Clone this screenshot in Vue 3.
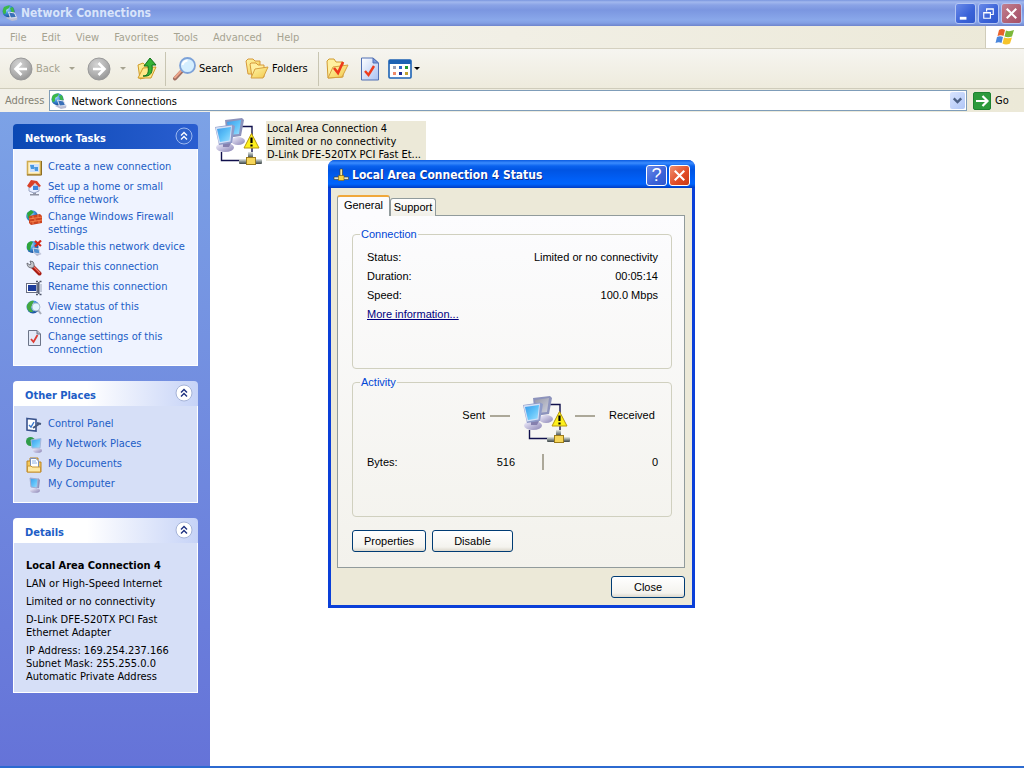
<template>
  <svg class="sprite" aria-hidden="true">
    <defs>
      <radialGradient id="gGlobe" cx="0.35" cy="0.3" r="0.8">
        <stop offset="0" stop-color="#b5e4ff" />
        <stop offset="0.5" stop-color="#3a8bd8" />
        <stop offset="1" stop-color="#123f86" />
      </radialGradient>
      <radialGradient id="gGray" cx="0.4" cy="0.3" r="0.8">
        <stop offset="0" stop-color="#d4d4d4" />
        <stop offset="0.6" stop-color="#aeaeae" />
        <stop offset="1" stop-color="#8e8e8e" />
      </radialGradient>
      <linearGradient id="gScreen" x1="0" y1="0" x2="1" y2="1">
        <stop offset="0" stop-color="#3c9ae8" />
        <stop offset="0.5" stop-color="#5cc0f8" />
        <stop offset="1" stop-color="#a0e0ff" />
      </linearGradient>
      <linearGradient id="gScreenOff" x1="0" y1="0" x2="1" y2="1">
        <stop offset="0" stop-color="#9698a8" />
        <stop offset="1" stop-color="#ced0dc" />
      </linearGradient>
      <linearGradient id="gBase" x1="0" y1="0" x2="1" y2="1">
        <stop offset="0" stop-color="#f4f2ff" />
        <stop offset="1" stop-color="#8a84b4" />
      </linearGradient>
      <linearGradient id="gFolder" x1="0" y1="0" x2="1" y2="1">
        <stop offset="0" stop-color="#fff6a8" />
        <stop offset="1" stop-color="#f2c84c" />
      </linearGradient>
      <linearGradient id="gPaper" x1="0" y1="0" x2="1" y2="1">
        <stop offset="0" stop-color="#ffffff" />
        <stop offset="1" stop-color="#a9c1f2" />
      </linearGradient>
      <linearGradient id="gPipe" x1="0" y1="0" x2="0" y2="1">
        <stop offset="0" stop-color="#e4e8e4" />
        <stop offset="0.5" stop-color="#8a9494" />
        <stop offset="1" stop-color="#3c4444" />
      </linearGradient>
    </defs>

    <symbol id="i-globe" viewBox="0 0 16 16">
      <path d="M4 13 9 10 15.500 12.500 15 15 10 16z" fill="#b9bdd4" />
      <circle cx="6.500" cy="6.200" r="6" fill="url(#gGlobe)" />
      <path d="M2 2Q5 0 8 0.500L7 3 4 5 4 8 2 9.500Q-0.500 6 2 2zM8 3 11 2 12.500 7 10 8z" fill="#3cb848" />
      <path d="M6.500 7 12.500 8 14.500 12.500 8.500 13z" fill="#3a70b8" stroke="#dfe3f0" />
    </symbol>

    <symbol id="i-back" viewBox="0 0 24 24">
      <circle cx="12" cy="12" r="11" fill="url(#gGray)" stroke="#9a9a9a" />
      <path d="M12.500 6 6.500 12 12.500 18M7 12H18" fill="none" stroke="#fff" stroke-width="2.600" />
    </symbol>
    <symbol id="i-forward" viewBox="0 0 24 24">
      <circle cx="12" cy="12" r="11" fill="url(#gGray)" stroke="#9a9a9a" />
      <path d="M11.500 6 17.500 12 11.500 18M17 12H6" fill="none" stroke="#fff" stroke-width="2.600" />
    </symbol>

    <symbol id="i-up" viewBox="0 0 24 24">
      <path d="M3 8 8 6 10 8 16 7 16 19 5 22z" fill="url(#gFolder)" stroke="#d09a28" />
      <path d="M3 21 8 11 21 10 16 21z" fill="#ffe788" stroke="#d09a28" />
      <path d="M8 19C13 19 14 15 13 9H9L15 1 21 8H17C18 15 16 20 8 19z" fill="#35b335" stroke="#13701c" />
    </symbol>

    <symbol id="i-search" viewBox="0 0 24 24">
      <path d="M9.500 14.500 3 21.500" stroke="#9f6d60" stroke-width="4" stroke-linecap="round" />
      <path d="M9 14 3 20.500" stroke="#eca58a" stroke-width="2" stroke-linecap="round" />
      <circle cx="15.500" cy="8.500" r="7.500" fill="#d5efff" stroke="#7da2d8" stroke-width="1.800" />
      <path d="M10.500 8Q11.500 4 15.500 3.500" fill="none" stroke="#fff" stroke-width="2" />
    </symbol>

    <symbol id="i-folders" viewBox="0 0 24 24">
      <path d="M1 4 3 2H8L10 4H15V17H3z" fill="url(#gFolder)" stroke="#d6983a" />
      <path d="M5 7 6 6H11L13 8H19V20H7z" fill="#fff0a0" stroke="#d6983a" />
      <path d="M6 21 10 12 23 10 18 21z" fill="url(#gFolder)" stroke="#d6a040" />
    </symbol>

    <symbol id="i-folder-check" viewBox="0 0 24 24">
      <path d="M2 4 4 2H9L11 5H18V20L3 21z" fill="#fff0a0" stroke="#d09a30" />
      <path d="M3 21 8 10 23 8 17 20z" fill="url(#gFolder)" stroke="#d6a040" />
      <path d="M9 11 13 16 18 5" fill="none" stroke="#ee3a1c" stroke-width="2.600" />
    </symbol>

    <symbol id="i-doc-check" viewBox="0 0 20 24">
      <path d="M1.500 1H13L18.500 6V23H1.500z" fill="url(#gPaper)" stroke="#5270b4" />
      <path d="M13 1V6H18.500z" fill="#7c9be0" stroke="#5270b4" />
      <path d="M5 14 8.500 18 14 9" fill="none" stroke="#ee3a1c" stroke-width="2.400" />
    </symbol>

    <symbol id="i-views" viewBox="0 0 24 20">
      <rect x="1" y="1" width="22" height="18" rx="1" fill="#fff" stroke="#1c62b4" stroke-width="1.600" />
      <path d="M1 3H23" stroke="#1c62b4" stroke-width="4" />
      <path d="M5 7H8V10H5z" fill="#98a0b8" />
      <path d="M11 7H14V10H11z" fill="#2a68c8" />
      <path d="M17 7H20V10H17z" fill="#209a30" />
      <path d="M5 13H8V16H5z" fill="#f08a68" />
      <path d="M11 13H14V16H11z" fill="#1c2c94" />
      <path d="M17 13H20V16H17z" fill="#c0a030" />
    </symbol>

    <symbol id="i-winlogo" viewBox="0 0 20 18">
      <path d="M4 2Q7 0 10 2L8.500 8Q6 6.500 2.500 8z" fill="#e8622c" />
      <path d="M11 2.500Q14 4 19 2L17 8.500Q13 10 9.500 8.500z" fill="#7cb83a" />
      <path d="M2 9Q5 7.500 8 9L6.500 15Q4 13.500 0.500 15z" fill="#4a86dc" />
      <path d="M9 9.500Q13 11 17 9.500L15 15.500Q11 17.500 7.500 15.500z" fill="#f6c42c" />
    </symbol>

    <symbol id="i-go" viewBox="0 0 18 18">
      <rect x="0.500" y="0.500" width="17" height="17" rx="1.500" fill="#2c9a3c" stroke="#1d8230" />
      <path d="M3 9H14M9.500 4 14.500 9 9.500 14" fill="none" stroke="#fff" stroke-width="2.200" />
    </symbol>

    <symbol id="i-new" viewBox="0 0 16 16">
      <rect x="1.500" y="1.500" width="13" height="13" fill="#fff3c8" stroke="#d0ac50" stroke-width="1.600" />
      <path d="M1 15H15.500V1" fill="none" stroke="#8c6c24" />
      <rect x="4" y="4" width="9" height="8" fill="#cfe2ff" />
      <path d="M4 5H8V9H5zM8 7H12V11H9z" fill="#4a98e0" />
    </symbol>
    <symbol id="i-home" viewBox="0 0 16 16">
      <path d="M7 12H10V14H13V15.500H4V14H7z" fill="#9094a4" />
      <path d="M3 5H13V11L8 13 3 11z" fill="#e8eeff" stroke="#9ca6c4" />
      <path d="M7 6H12V10H7z" fill="#3c84dc" />
      <path d="M1 6 5 0 11 1 15 6 13 7 9 3 4 8z" fill="#d84028" />
    </symbol>
    <symbol id="i-firewall" viewBox="0 0 16 16">
      <circle cx="6" cy="6" r="5.800" fill="url(#gGlobe)" />
      <path d="M1 3 5 0 8 2 4 6 2 9z" fill="#2ea53c" />
      <path d="M3 6 14 4 16 6V13L5 15 3 13z" fill="#cc4420" />
      <path d="M3 9 16 7M4 12 16 10M7 6V9M12 5V7M9 9V11M7 12V14M13 11V13" stroke="#ff9058" stroke-width="0.800" />
    </symbol>
    <symbol id="i-disable" viewBox="0 0 16 16">
      <path d="M8 13 13 12 15.500 14 11 16z" fill="#b0b4cc" />
      <circle cx="6.500" cy="7" r="6" fill="url(#gGlobe)" />
      <path d="M1 4Q4 0 7 2L5 6 4 11 1 9z" fill="#2ea53c" />
      <path d="M7 8 13 9 14 14 8 13z" fill="#4f8fd0" stroke="#d4d8e8" />
      <path d="M9 1 15 6M15 0.500 9 6.500" stroke="#d42818" stroke-width="2.200" />
    </symbol>
    <symbol id="i-repair" viewBox="0 0 16 16">
      <path d="M7 7 13.500 13.500" stroke="#a81c14" stroke-width="4" stroke-linecap="round" />
      <path d="M7.500 6.500 14 13" stroke="#f07060" stroke-width="1.200" />
      <path d="M1 3 4 5 5 4 4 1Q8 1 8 4L8 7 6 8Q1 8 1 3z" fill="#c4c6cc" stroke="#5e6068" stroke-width="0.800" />
    </symbol>
    <symbol id="i-rename" viewBox="0 0 16 16">
      <rect x="0.500" y="3.500" width="11" height="9" fill="#fff" stroke="#6a6e80" />
      <rect x="2" y="5" width="8" height="6" fill="#1c3c9c" />
      <path d="M10 1.500H12M13.500 1.500H15.500M12.800 2V14M10 14.500H12M13.500 14.500H15.500" stroke="#4c5468" stroke-width="1.400" />
      <path d="M10.500 4V12M15 4V12" stroke="#9ca4b8" />
    </symbol>
    <symbol id="i-status" viewBox="0 0 16 16">
      <circle cx="7" cy="7" r="6.500" fill="url(#gGlobe)" />
      <path d="M1 5Q4 0 8 1L6 5 5 8 7 12 4 12Q0 9 1 5z" fill="#44a840" />
      <circle cx="10" cy="7" r="4" fill="#e2f3ff" stroke="#a8bcd0" />
      <path d="M12 10 15 14" stroke="#a8acb8" stroke-width="2" />
    </symbol>
    <symbol id="i-settings" viewBox="0 0 16 16">
      <path d="M2.500 0.500H11L14.500 4V15.500H2.500z" fill="#e4eaf8" stroke="#6c7488" />
      <path d="M11 0.500V4H14.500" fill="#b4bccc" stroke="#6c7488" />
      <path d="M5 9 7.500 12 11.500 5" fill="none" stroke="#dc3c34" stroke-width="1.800" />
    </symbol>

    <symbol id="i-control" viewBox="0 0 16 16">
      <path d="M1 1.500 10 2.500V14L1 13z" fill="#fff" stroke="#38528c" stroke-width="1.600" />
      <path d="M3 8 5 10 8 5" fill="none" stroke="#3a78cc" stroke-width="1.400" />
      <path d="M7 11 13 7M11 6 15 7" fill="none" stroke="#46587c" stroke-width="2" />
    </symbol>
    <symbol id="i-places" viewBox="0 0 16 16">
      <ellipse cx="11.500" cy="13.500" rx="4.500" ry="2.300" fill="url(#gBase)" />
      <circle cx="4.500" cy="4.500" r="4.500" fill="#2f9c4a" />
      <path d="M5 3 15 1.500 14 11 6 11z" fill="url(#gScreen)" stroke="#a6b8dc" />
    </symbol>
    <symbol id="i-documents" viewBox="0 0 16 16">
      <path d="M1 4H4V1H12V5H15V15H1z" fill="#f4c85c" stroke="#bd8420" />
      <path d="M4.500 1.500H10L12.500 4V11H4.500z" fill="#fff" stroke="#7c90bc" />
      <path d="M6 4H10M6 6H11" stroke="#8cb0e8" />
      <path d="M1.500 9H5L6 10H14.500V15H1.500z" fill="#ffe9a4" stroke="#c99632" />
    </symbol>
    <symbol id="i-computer" viewBox="0 0 16 16">
      <ellipse cx="9" cy="13.500" rx="5" ry="2.300" fill="url(#gBase)" />
      <path d="M12 1 14 3 13 11 10 11z" fill="#9094bc" />
      <path d="M4 1 12 2 11 11 5 10z" fill="url(#gScreen)" stroke="#a3acd0" />
    </symbol>

    <symbol id="i-lan" viewBox="0 0 48 48">
      <path d="M26 8.500H37V36M6.500 34V42.500H28" fill="none" stroke="#10104c" stroke-width="1.400" />
      <ellipse cx="23" cy="23" rx="7" ry="4" fill="url(#gBase)" />
      <path d="M10 2 27 0 29 2 26 18 12 20z" fill="#8d93bc" />
      <path d="M12 4 26 2 24 16 14 17z" />
      <ellipse cx="10" cy="29.500" rx="9" ry="4.500" fill="url(#gBase)" />
      <path d="M8 24 17 23 14 29 8 29z" fill="#8580ae" />
      <path d="M0 9 17 6.500 20 8 17 25 4 27z" fill="#8f9bc8" />
      <path d="M0.500 9.500 17 7.500 15.500 23.500 4 25.500z" fill="#d4e0f6" />
      <path d="M2 11 16 9 14.500 22.500 5 24z" fill="url(#gScreen)" />
      <path d="M36.500 15.500 44 30H29z" fill="#fdf01c" stroke="#b8980c" stroke-linejoin="round" />
      <path d="M36.500 19.500V25M36.500 26.500V28.500" stroke="#000" stroke-width="2.200" />
      <rect x="33" y="34" width="5" height="6" fill="url(#gPipe)" />
      <rect x="24" y="41" width="23" height="5" rx="1" fill="url(#gPipe)" />
      <rect x="31.500" y="39.500" width="9" height="7" fill="#f6d65a" stroke="#9c7c1c" />
    </symbol>
    <symbol id="i-plug" viewBox="0 0 16 16">
      <path d="M7 2H9.500V9H7z" fill="#f4e8a0" stroke="#3c3c20" stroke-width="0.600" />
      <path d="M1 10H15.500V12.500H1z" fill="#e4e4d4" stroke="#3c3c20" stroke-width="0.600" />
      <path d="M5.500 8.500H11V13.500H5.500z" fill="#f8d440" stroke="#7c5c10" stroke-width="0.600" />
    </symbol>
  </svg>

  <div class="window">
    <header class="titlebar">
      <svg class="icon16"><use href="#i-globe" /></svg>
      <h1>Network Connections</h1>
      <button class="cap" aria-label="Minimize">
        <svg viewBox="0 0 20 20"><path d="M4 15H11" stroke="#fff" stroke-width="3" /></svg>
      </button>
      <button class="cap" aria-label="Restore">
        <svg viewBox="0 0 20 20">
          <path d="M8 8V5H15V11H12M8 5.500H15" fill="none" stroke="#fff" stroke-width="1.200" />
          <path d="M5 9H12V15H5zM5 9.500H12" fill="none" stroke="#fff" stroke-width="1.200" />
        </svg>
      </button>
      <button class="cap cap-close" aria-label="Close window">
        <svg viewBox="0 0 20 20"><path d="M5 5 15 15M15 5 5 15" stroke="#fff" stroke-width="2.200" /></svg>
      </button>
    </header>

    <nav class="menubar">
      <button v-for="item in menu" :key="item">{{ item }}</button>
      <span class="flag"><svg><use href="#i-winlogo" /></svg></span>
    </nav>

    <div class="toolbar">
      <button class="tool off"><svg class="icon24"><use href="#i-back" /></svg>Back<i class="caret"></i></button>
      <button class="tool off fwd" aria-label="Forward"><svg class="icon24"><use href="#i-forward" /></svg><i class="caret"></i></button>
      <button class="tool" aria-label="Up"><svg class="icon24"><use href="#i-up" /></svg></button>
      <span class="sep"></span>
      <button class="tool"><svg class="icon24"><use href="#i-search" /></svg>Search</button>
      <button class="tool folders"><svg class="icon24"><use href="#i-folders" /></svg>Folders</button>
      <span class="sep"></span>
      <button class="tool options" aria-label="Folder options"><svg class="icon24"><use href="#i-folder-check" /></svg></button>
      <button class="tool" aria-label="Properties page"><svg class="icon24"><use href="#i-doc-check" /></svg></button>
      <button class="tool views" aria-label="Views"><svg class="icon24"><use href="#i-views" /></svg><i class="caret"></i></button>
    </div>

    <div class="addressbar">
      <label for="address">Address</label>
      <div class="combo">
        <svg class="icon16"><use href="#i-globe" /></svg>
        <input id="address" v-model="address" type="text" />
        <button class="drop" aria-label="Show addresses">
          <svg viewBox="0 0 14 16"><path d="M3.500 6 7 9.500 10.500 6" fill="none" stroke="#4d6185" stroke-width="2.200" /></svg>
        </button>
      </div>
      <button class="go"><svg><use href="#i-go" /></svg>Go</button>
    </div>

    <div class="body">
      <aside class="sidebar">
        <section v-for="panel in panels" :key="panel.title" class="panel" :class="{ primary: panel.primary }">
          <header>
            <h2>{{ panel.title }}</h2>
            <button class="chevron" :aria-label="'Collapse ' + panel.title">
              <svg viewBox="0 0 18 18">
                <circle cx="9" cy="9" r="8" />
                <path d="M6 8.500 9 5.500 12 8.500M6 12.500 9 9.500 12 12.500" fill="none" stroke-width="1.400" />
              </svg>
            </button>
          </header>
          <ul>
            <li v-for="link in panel.links" :key="link.text">
              <svg class="icon16"><use :href="'#i-' + link.icon" /></svg>
              <a href="#">{{ link.text }}</a>
            </li>
          </ul>
        </section>

        <section class="panel">
          <header>
            <h2>Details</h2>
            <button class="chevron" aria-label="Collapse Details">
              <svg viewBox="0 0 18 18">
                <circle cx="9" cy="9" r="8" />
                <path d="M6 8.500 9 5.500 12 8.500M6 12.500 9 9.500 12 12.500" fill="none" stroke-width="1.400" />
              </svg>
            </button>
          </header>
          <div class="details">
            <p><strong>Local Area Connection 4</strong></p>
            <p>LAN or High-Speed Internet</p>
            <p>Limited or no connectivity</p>
            <p>D-Link DFE-520TX PCI Fast<br />Ethernet Adapter</p>
            <p>IP Address: 169.254.237.166<br />Subnet Mask: 255.255.0.0<br />Automatic Private Address</p>
          </div>
        </section>
      </aside>

      <main>
        <div class="tile">
          <svg class="lan lan-on"><use href="#i-lan" /></svg>
          <div class="tile-text">
            <div>Local Area Connection 4</div>
            <div>Limited or no connectivity</div>
            <div>D-Link DFE-520TX PCI Fast Et...</div>
          </div>
        </div>
      </main>
    </div>

    <div class="dialog" role="dialog" aria-labelledby="dialog-title">
      <header>
        <svg class="icon16"><use href="#i-plug" /></svg>
        <h2 id="dialog-title">Local Area Connection 4 Status</h2>
        <button class="cap help" aria-label="Help">?</button>
        <button class="cap close" aria-label="Close dialog">
          <svg viewBox="0 0 20 20"><path d="M5 5 15 15M15 5 5 15" stroke="#fff" stroke-width="2.200" /></svg>
        </button>
      </header>
      <div class="dialog-body">
        <div class="tabs" role="tablist">
          <button
            v-for="tab in tabs"
            :key="tab"
            role="tab"
            :class="{ active: tab === activeTab }"
            @click="activeTab = tab"
          >{{ tab }}</button>
        </div>
        <div class="page">
          <fieldset>
            <legend>Connection</legend>
            <dl>
              <div v-for="row in status" :key="row.label">
                <dt>{{ row.label }}</dt>
                <dd>{{ row.value }}</dd>
              </div>
            </dl>
            <a class="more" href="#">More information...</a>
          </fieldset>
          <fieldset>
            <legend>Activity</legend>
            <div class="activity">
              <span class="sent">Sent<i></i></span>
              <svg class="lan lan-off"><use href="#i-lan" /></svg>
              <span class="received"><i></i>Received</span>
            </div>
            <div class="bytes">
              <span>Bytes:</span>
              <span>516</span>
              <i></i>
              <span class="num">0</span>
            </div>
          </fieldset>
          <div class="actions">
            <button class="btn">Properties</button>
            <button class="btn wide">Disable</button>
          </div>
        </div>
        <div class="footer">
          <button class="btn">Close</button>
        </div>
      </div>
    </div>
  </div>
</template>

<script setup>
import { ref } from 'vue'

const address = ref('Network Connections')
const menu = ['File', 'Edit', 'View', 'Favorites', 'Tools', 'Advanced', 'Help']

const panels = [
  {
    title: 'Network Tasks',
    primary: true,
    links: [
      { icon: 'new', text: 'Create a new connection' },
      { icon: 'home', text: 'Set up a home or small office network' },
      { icon: 'firewall', text: 'Change Windows Firewall settings' },
      { icon: 'disable', text: 'Disable this network device' },
      { icon: 'repair', text: 'Repair this connection' },
      { icon: 'rename', text: 'Rename this connection' },
      { icon: 'status', text: 'View status of this connection' },
      { icon: 'settings', text: 'Change settings of this connection' }
    ]
  },
  {
    title: 'Other Places',
    primary: false,
    links: [
      { icon: 'control', text: 'Control Panel' },
      { icon: 'places', text: 'My Network Places' },
      { icon: 'documents', text: 'My Documents' },
      { icon: 'computer', text: 'My Computer' }
    ]
  }
]

const tabs = ['General', 'Support']
const activeTab = ref('General')

const status = [
  { label: 'Status:', value: 'Limited or no connectivity' },
  { label: 'Duration:', value: '00:05:14' },
  { label: 'Speed:', value: '100.0 Mbps' }
]
</script>

<style>
body {
  margin: 0;
  overflow: hidden;
}
</style>

<style scoped>
* { box-sizing: border-box; }

.sprite {
  position: absolute;
  width: 0;
  height: 0;
}

button, input {
  font: inherit;
  color: inherit;
  background: none;
  border: 0;
  padding: 0;
  margin: 0;
}

h1, h2, p, ul, dl, dd { margin: 0; padding: 0; }
svg { display: block; flex: none; }
.icon16 { width: 16px; height: 16px; }
.icon24 { width: 24px; height: 24px; }

.window {
  position: relative;
  display: flex;
  flex-direction: column;
  height: 100vh;
  font: 11px/13px "DejaVu Sans Condensed", "DejaVu Sans", sans-serif;
  color: #000;
  background: #ece9d8;
}

/* title bar */
.titlebar {
  display: flex;
  align-items: center;
  gap: 2px;
  height: 26px;
  padding: 0 2px;
  background: linear-gradient(#7a96df 0, #a2b8ee 2px, #8aa3e6 5px, #7b96e0 10px, #8aa8ea 20px, #829fe4 23px, #6e84cc 26px);
}
.titlebar h1 {
  flex: 1;
  padding-left: 1px;
  font: bold 12px/16px "DejaVu Sans Condensed", "DejaVu Sans", sans-serif;
  color: #d8e4fa;
}
.cap {
  width: 21px;
  height: 21px;
  border: 1px solid #b4c6f4;
  border-radius: 3px;
  background: linear-gradient(135deg, #6a8ae8, #3a62d8 60%, #3058cc);
}
.cap svg { width: 19px; height: 19px; }
.cap-close { background: linear-gradient(135deg, #c08090, #b06074 60%, #a45068); }

/* menu */
.menubar {
  display: flex;
  align-items: center;
  height: 23px;
  padding-left: 10px;
  gap: 15px;
  color: #a6a391;
  border-bottom: 1px solid #d4d0c0;
  background: linear-gradient(90deg, #f6f5f2, #ece9d8);
}
.flag {
  display: flex;
  align-items: center;
  justify-content: center;
  width: 39px;
  height: 22px;
  margin-left: auto;
  border-left: 1px solid #d0ccba;
  background: #fff;
}
.flag svg { width: 20px; height: 18px; }

/* toolbar */
.toolbar {
  display: flex;
  align-items: center;
  height: 40px;
  padding-left: 9px;
  gap: 6px;
  border-bottom: 1px solid #cfccbb;
  background: linear-gradient(#f6f5f0, #eeebdd);
}
.tool {
  display: flex;
  align-items: center;
  gap: 3px;
}
.off { color: #a6a391; }
.caret {
  width: 0;
  border: 3px solid transparent;
  border-top-color: currentColor;
  border-bottom: 0;
}
.off .caret { margin-left: 6px; }
.fwd { margin: 0 3px 0 6px; }
.folders { margin-left: 6px; }
.options { margin-right: 3px; }
.views { gap: 2px; }
.sep {
  width: 1px;
  height: 34px;
  background: #c8c5b2;
}
.folders + .sep { margin-left: 4px; }

/* address */
.addressbar {
  display: flex;
  align-items: center;
  height: 23px;
  padding-left: 5px;
  gap: 5px;
  background: linear-gradient(90deg, #f2f0e8, #ece9d8);
}
.addressbar label { color: #848274; }
.combo {
  display: flex;
  flex: 1;
  align-items: center;
  height: 21px;
  padding: 1px;
  gap: 4px;
  border: 1px solid #7f9db9;
  background: #fff;
}
.combo input {
  flex: 1;
  padding-top: 2px;
}
.drop {
  width: 15px;
  height: 17px;
  border-radius: 2px;
  background: linear-gradient(135deg, #d8e4ff, #b0c6f6);
}
.go {
  display: flex;
  align-items: center;
  width: 52px;
  gap: 4px;
  padding-left: 1px;
}
.go svg { width: 18px; height: 18px; }

/* sidebar */
.body {
  display: flex;
  flex: 1;
  min-height: 0;
  background: #fff;
  border-bottom: 2px solid #2c6ad0;
}
.sidebar {
  width: 210px;
  padding: 12px 12px 0 13px;
  background: linear-gradient(#7ca2e6, #6573d8);
}
.panel { margin-bottom: 15px; }
.panel header {
  display: flex;
  justify-content: space-between;
  height: 25px;
  padding: 3px 5px 0 12px;
  color: #215dc6;
  border-radius: 4px 4px 0 0;
  background: linear-gradient(90deg, #fff 40%, #c6d3f7);
}
.panel h2 {
  padding-top: 5px;
  font: bold 11px/13px "DejaVu Sans Condensed", "DejaVu Sans", sans-serif;
}
.chevron { height: 18px; }
.chevron svg { width: 18px; height: 18px; }
.chevron circle { fill: #fff; stroke: #a6b4d8; }
.chevron path { stroke: #1c3080; }
.panel ul, .details {
  border: 1px solid #fff;
  border-top: 0;
  background: #d6dff7;
}
.panel ul {
  display: flex;
  flex-direction: column;
  gap: 4px;
  padding: 11px 12px 9px;
  list-style: none;
}
.panel li {
  display: flex;
  gap: 6px;
  min-height: 16px;
}
.panel a {
  flex: 1;
  color: #215dc6;
  text-decoration: none;
}
.primary header {
  color: #fff;
  background: linear-gradient(90deg, #0a48b4, #2a5ed0);
}
.primary .chevron circle { fill: #2f63cc; stroke: #9cb8f0; }
.primary .chevron path { stroke: #fff; }
.primary ul { background: #eff3ff; }
.details {
  display: flex;
  flex-direction: column;
  gap: 5px;
  padding: 16px 12px 9px;
}

/* folder view */
main {
  flex: 1;
  padding: 6px 5px;
}
.tile {
  display: flex;
  gap: 3px;
}
.lan { width: 48px; height: 48px; }
.lan-on { fill: url(#gScreen); }
.lan-off { fill: url(#gScreenOff); }
.tile-text {
  align-self: start;
  width: 160px;
  margin-top: 3px;
  padding: 1px 0 0 1px;
  white-space: nowrap;
  background: #ece9d8;
}

/* status dialog */
.dialog {
  position: absolute;
  top: 160px;
  left: 328px;
  width: 367px;
  padding: 0 3px 3px;
  font: 11px/13px "Liberation Sans", Arial, sans-serif;
  border-radius: 7px 7px 0 0;
  background: #0a3fd8;
}
.dialog header {
  display: flex;
  align-items: center;
  gap: 2px;
  height: 28px;
  margin: 0 -3px;
  padding: 2px 5px 0 5px;
  border-radius: 7px 7px 0 0;
  background: linear-gradient(#0a5ae0 0, #3a8cff 3px, #0a62ee 6px, #0054e3 10px, #0060f8 20px, #0064fc 24px, #003cc4 28px);
}
.dialog h2 {
  flex: 1;
  padding-left: 1px;
  font: bold 12px/16px "DejaVu Sans Condensed", "DejaVu Sans", sans-serif;
  color: #fff;
  text-shadow: 1px 1px #0a2a8c;
}
.dialog .cap { border-color: #fff; }
.help {
  font: 18px/18px "Liberation Sans", Arial, sans-serif;
  color: #fff;
}
.dialog .close { background: linear-gradient(135deg, #f09070, #e04a24 60%, #c83a14); }
.dialog-body {
  padding: 7px 7px 7px 6px;
  background: #ece9d8;
}
.tabs {
  position: relative;
  display: flex;
  align-items: flex-end;
  height: 21px;
  margin-bottom: -1px;
}
.tabs button {
  width: 46px;
  height: 18px;
  border: 1px solid #919b9c;
  border-bottom: 0;
  border-radius: 3px 3px 0 0;
  background: linear-gradient(#fff, #f0efe8);
}
.tabs .active {
  width: 53px;
  height: 21px;
  padding-bottom: 3px;
  border-top: 2px solid #f0a83c;
  background: #fcfcfe;
}
.page {
  padding: 12px 12px 15px 14px;
  border: 1px solid #919b9c;
  background: linear-gradient(#fcfcfe, #f3f2ec);
}
fieldset {
  height: 141px;
  margin: 0 0 7px;
  padding: 7px 13px 0 14px;
  border: 1px solid #d0d0bf;
  border-radius: 4px;
}
legend {
  margin-left: -7px;
  padding: 0 1px;
  color: #0046d5;
}
dl div {
  display: flex;
  justify-content: space-between;
  line-height: 19px;
}
.more {
  color: #000080;
  line-height: 19px;
}
.activity {
  display: grid;
  grid-template-columns: 1fr 48px 87px;
}
.activity span {
  display: flex;
  align-items: center;
  height: 13px;
  margin-top: 13px;
}
.activity i {
  width: 20px;
  height: 2px;
  background: #aca899;
}
.activity .sent {
  justify-content: flex-end;
  gap: 5px;
  padding-right: 13px;
}
.activity .received {
  gap: 14px;
  padding-left: 4px;
}
.bytes {
  display: grid;
  grid-template-columns: 1fr auto 2px 87px;
  align-items: center;
  column-gap: 27px;
  margin-top: 10px;
}
.num { text-align: right; }
.bytes i {
  height: 16px;
  background: #aca899;
}
.actions {
  display: flex;
  gap: 6px;
  padding-top: 6px;
}
.btn {
  width: 74px;
  height: 22px;
  border: 1px solid #003c74;
  border-radius: 3px;
  background: linear-gradient(#fff, #f4f3ee 80%, #dcd8cc);
}
.wide { width: 81px; }
.footer {
  display: flex;
  justify-content: flex-end;
  padding-top: 8px;
}
</style>
